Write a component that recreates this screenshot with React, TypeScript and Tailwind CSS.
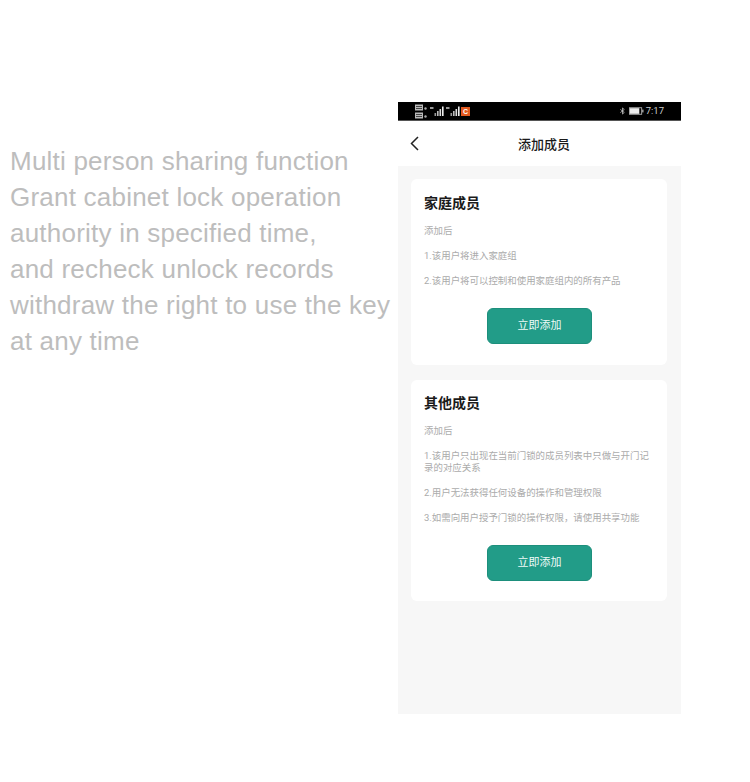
import React from 'react';

const cjk = 'font-["Roboto","Noto_Sans_CJK_SC",sans-serif]';

const introLines = [
  'Multi person sharing function',
  'Grant cabinet lock operation',
  'authority in specified time,',
  'and recheck unlock records',
  'withdraw the right to use the key',
  'at any time',
];

const SimIcon = () => (
  <svg width="12" height="7" viewBox="0 0 12 7">
    <rect x="0" y="0.5" width="8" height="6" fill="#b9b9b9" />
    <rect x="1" y="2" width="6" height="1" fill="#444" />
    <rect x="1" y="4" width="6" height="1" fill="#444" />
    <circle cx="10.5" cy="4.5" r="1.2" fill="#aaa" />
  </svg>
);

const Signal = () => (
  <svg width="14" height="10" viewBox="0 0 14 10">
    <rect x="0" y="1" width="3.5" height="2" fill="#999" />
    <rect x="4.5" y="7" width="1.6" height="3" fill="#999" />
    <rect x="7" y="5" width="1.6" height="5" fill="#bbb" />
    <rect x="9.5" y="3" width="1.6" height="7" fill="#ddd" />
    <rect x="12" y="0.5" width="1.6" height="9.5" fill="#eee" />
  </svg>
);

const StatusBar = () => (
  <div className="h-[19px] bg-black border-b border-[#555] flex items-center justify-between pl-[17px] pr-[17px]">
    <div className="flex items-center">
      <div className="flex flex-col gap-[1px] mr-[3px]">
        <SimIcon />
        <SimIcon />
      </div>
      <Signal />
      <div className="w-[2px]" />
      <Signal />
      <div className="w-[9px] h-[9px] ml-[1px] bg-[#e2591f] flex items-center justify-center text-white text-[7px] font-bold leading-none font-['Liberation_Sans',sans-serif]">
        C
      </div>
    </div>
    <div className="flex items-center text-[#cccccc]">
      <svg width="5" height="10" viewBox="0 0 7 10" fill="none" stroke="#d5d5d5" strokeWidth="1">
        <path d="M0.5 2.8 L6 7 L3.5 9.3 V0.7 L6 3 L0.5 7.2" />
      </svg>
      <svg className="ml-[4px]" width="15" height="8" viewBox="0 0 16 8">
        <rect x="0.5" y="0.5" width="13" height="7" fill="none" stroke="#aaa" />
        <rect x="1" y="1" width="10" height="6" fill="#eee" />
        <rect x="14" y="2.5" width="1.5" height="3" fill="#aaa" />
      </svg>
      <span className="ml-[2px] text-[9.5px] leading-none font-['Roboto',sans-serif]">7:17</span>
    </div>
  </div>
);

const AddButton = () => (
  <div className="flex justify-center">
    <button className={`w-[105px] h-[36px] ml-[1px] pt-[1px] rounded-[6px] bg-[#229c88] border border-[#1d8f7c] text-[#f0faf7] text-[11px] ${cjk}`}>
      立即添加
    </button>
  </div>
);

interface MemberCardProps {
  title: string;
  items: string[];
  cardClass: string;
}

const MemberCard: React.FC<MemberCardProps> = ({ title, items, cardClass }) => (
  <div className={`bg-white rounded-[6px] px-[13px] ${cardClass}`}>
    <h2 className={`text-[14px] leading-[20px] font-semibold text-[#1a1a1a] ${cjk}`}>{title}</h2>
    <div className={`mt-[12px] flex flex-col gap-[13px] text-[9.45px] leading-[12px] text-[#ababab] ${cjk}`}>
      <p>添加后</p>
      {items.map((item) => (
        <p key={item}>{item}</p>
      ))}
    </div>
    <div className="mt-[21px]">
      <AddButton />
    </div>
  </div>
);

export default function App() {
  return (
    <div className="w-[750px] h-[782px] bg-white flex items-start pt-[102px] overflow-hidden">
      <div className="w-[398px] pl-[10px] pt-[41px] text-[26px] leading-[36px] tracking-[0.22px] text-[#bdbdbd] font-['Liberation_Sans',sans-serif] whitespace-nowrap">
        {introLines.map((line) => (
          <div key={line}>{line}</div>
        ))}
      </div>

      <div className="w-[283px] flex flex-col">
        <StatusBar />
        <div className="relative h-[45px] pt-[3px] flex items-center justify-center">
          <svg className="absolute left-[12px] top-[15px]" width="9" height="15" viewBox="0 0 9 15" fill="none" stroke="#222" strokeWidth="1.5">
            <path d="M8 1 L1.5 7.5 L8 14" />
          </svg>
          <span className={`ml-[9px] text-[13px] font-medium text-[#1a1a1a] ${cjk}`}>添加成员</span>
        </div>
        <div className="h-[548px] bg-[#f7f7f7] pt-[13px] pl-[13px] pr-[14px] flex flex-col gap-[15px]">
          <MemberCard
            title="家庭成员"
            cardClass="pt-[14px] pb-[21px]"
            items={['1.该用户将进入家庭组', '2.该用户将可以控制和使用家庭组内的所有产品']}
          />
          <MemberCard
            title="其他成员"
            cardClass="pt-[13px] pb-[20px]"
            items={[
              '1.该用户只出现在当前门锁的成员列表中只做与开门记录的对应关系',
              '2.用户无法获得任何设备的操作和管理权限',
              '3.如需向用户授予门锁的操作权限，请使用共享功能',
            ]}
          />
        </div>
      </div>
    </div>
  );
}
